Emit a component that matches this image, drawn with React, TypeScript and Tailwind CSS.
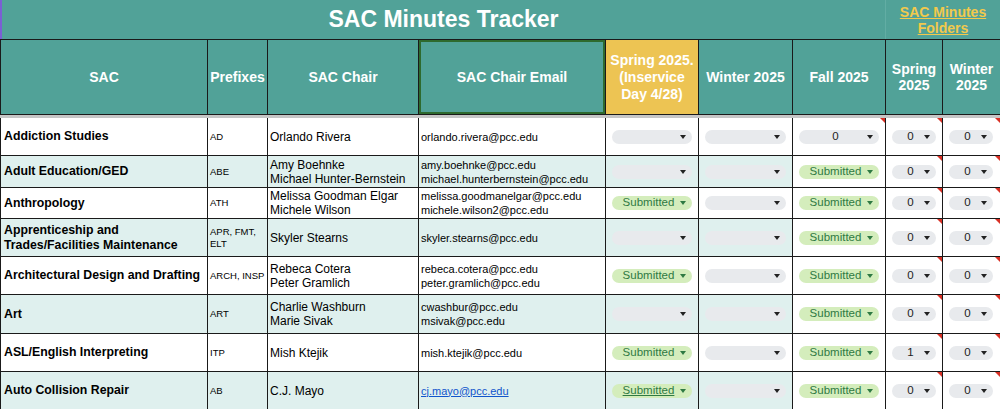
const cols = "grid grid-cols-[206px_59px_150px_186px_92px_93px_92px_56px_57px] gap-x-px pl-px";

type Chip = "" | "0" | "1" | "Submitted";

type Row = {
  sac: string[];
  prefix: string[];
  chair: string[];
  email: string[];
  link?: boolean;
  spring: Chip;
  winter: Chip;
  fall: Chip;
  spring25: Chip;
  winter25: Chip;
  fallNote?: boolean;
  h: string;
};

const rows: Row[] = [
  { sac: ["Addiction Studies"], prefix: ["AD"], chair: ["Orlando Rivera"], email: ["orlando.rivera@pcc.edu"], spring: "", winter: "", fall: "0", spring25: "0", winter25: "0", fallNote: true, h: "h-[37px]" },
  { sac: ["Adult Education/GED"], prefix: ["ABE"], chair: ["Amy Boehnke", "Michael Hunter-Bernstein"], email: ["amy.boehnke@pcc.edu", "michael.hunterbernstein@pcc.edu"], spring: "", winter: "", fall: "Submitted", spring25: "0", winter25: "0", h: "h-[31px]" },
  { sac: ["Anthropology"], prefix: ["ATH"], chair: ["Melissa Goodman Elgar", "Michele Wilson"], email: ["melissa.goodmanelgar@pcc.edu", "michele.wilson2@pcc.edu"], spring: "Submitted", winter: "", fall: "Submitted", spring25: "0", winter25: "0", h: "h-[30px]" },
  { sac: ["Apprenticeship and", "Trades/Facilities Maintenance"], prefix: ["APR, FMT,", "ELT"], chair: ["Skyler Stearns"], email: ["skyler.stearns@pcc.edu"], spring: "", winter: "", fall: "Submitted", spring25: "0", winter25: "0", h: "h-[37px]" },
  { sac: ["Architectural Design and Drafting"], prefix: ["ARCH, INSP"], chair: ["Rebeca Cotera", "Peter Gramlich"], email: ["rebeca.cotera@pcc.edu", "peter.gramlich@pcc.edu"], spring: "Submitted", winter: "", fall: "Submitted", spring25: "0", winter25: "0", h: "h-[37px]" },
  { sac: ["Art"], prefix: ["ART"], chair: ["Charlie Washburn", "Marie Sivak"], email: ["cwashbur@pcc.edu", "msivak@pcc.edu"], spring: "", winter: "", fall: "Submitted", spring25: "0", winter25: "0", h: "h-[38px]" },
  { sac: ["ASL/English Interpreting"], prefix: ["ITP"], chair: ["Mish Ktejik"], email: ["mish.ktejik@pcc.edu"], spring: "Submitted", winter: "", fall: "Submitted", spring25: "1", winter25: "0", h: "h-[37px]" },
  { sac: ["Auto Collision Repair"], prefix: ["AB"], chair: ["C.J. Mayo"], email: ["cj.mayo@pcc.edu"], link: true, spring: "Submitted", winter: "", fall: "Submitted", spring25: "0", winter25: "0", h: "h-[37px]" },
];

function Note() {
  return <span className="absolute top-0 right-0 w-0 h-0 border-l-[5px] border-l-transparent border-t-[5px] border-t-[#d93025]" />;
}

function Dropdown({ value, underline }: { value: Chip; underline?: boolean }) {
  const green = value === "Submitted";
  return (
    <div
      className={`mx-[6px] flex h-[14px] w-full items-center rounded-full pl-[7px] pr-[6px] ${
        green ? "bg-[#d4edbc] text-[#2f7a43]" : "bg-[#e8eaed] text-[#222]"
      }`}
    >
      <span className={`flex-1 text-center text-[11.5px] leading-none ${underline ? "underline" : ""}`}>{value}</span>
      <span className="ml-[2px] h-0 w-0 border-x-[3.5px] border-x-transparent border-t-[4px] border-t-current" />
    </div>
  );
}

function Lines({ items }: { items: string[] }) {
  return (
    <>
      {items.map((t) => (
        <div key={t}>{t}</div>
      ))}
    </>
  );
}

export default function App() {
  return (
    <div className="h-[409px] w-[1000px] overflow-hidden bg-white font-['Liberation_Sans',Arial,sans-serif] text-black">
      {/* Title band */}
      <div className="flex h-[39px] bg-[#51a298]">
        <div className="w-[2px] bg-[#7b5fd4]" />
        <div className="flex flex-1 items-center justify-center text-[23px] font-bold text-white">SAC Minutes Tracker</div>
        <div className="flex w-[115px] flex-col items-center justify-center border-l border-[#62ada4] text-[14px] font-bold leading-[16px] text-[#f2c94c] underline">
          <span>SAC Minutes</span>
          <span>Folders</span>
        </div>
      </div>

      {/* Header row */}
      <div className={`${cols} bg-[#1a1a1a] py-px text-[14px] font-bold leading-[17px] text-white`}>
        <div className="flex h-[74px] items-center justify-center bg-[#51a298]">SAC</div>
        <div className="flex items-center justify-center bg-[#51a298]">Prefixes</div>
        <div className="flex items-center justify-center bg-[#51a298]">SAC Chair</div>
        <div className="flex items-center justify-center border-2 border-[#2e6a2e] bg-[#51a298]">SAC Chair Email</div>
        <div className="flex flex-col items-center justify-center bg-[#edc453] text-center">
          <span>Spring 2025.</span>
          <span>(Inservice</span>
          <span>Day 4/28)</span>
        </div>
        <div className="flex items-center justify-center bg-[#51a298]">Winter 2025</div>
        <div className="flex items-center justify-center bg-[#51a298]">Fall 2025</div>
        <div className="flex flex-col items-center justify-center bg-[#51a298] leading-[16px]">
          <span>Spring</span>
          <span>2025</span>
        </div>
        <div className="flex flex-col items-center justify-center bg-[#51a298] leading-[16px]">
          <span>Winter</span>
          <span>2025</span>
        </div>
      </div>

      {/* Frozen divider */}
      <div className="h-[3px] bg-[#c6c6c6]" />

      {/* Body */}
      <div className="flex flex-col gap-y-px bg-[#1a1a1a]">
        {rows.map((r, i) => {
          const shade = i % 2 === 1 ? "bg-[#dff0ee]" : "bg-white";
          return (
            <div key={r.sac.join(" ")} className={`${cols} ${r.h}`}>
              <div className={`${shade} flex flex-col justify-center pl-[3px] text-[12.3px] font-bold leading-[15px]`}>
                <Lines items={r.sac} />
              </div>
              <div className={`${shade} flex flex-col justify-center whitespace-nowrap pl-[2px] text-[9.5px] leading-[12px]`}>
                <Lines items={r.prefix} />
              </div>
              <div className={`${shade} flex flex-col justify-center pl-[2px] text-[12px] leading-[14px]`}>
                <Lines items={r.chair} />
              </div>
              <div className={`${shade} flex flex-col justify-center pl-[2px] text-[11px] leading-[14px]`}>
                {r.link ? (
                  <span className="text-[#1155cc] underline">{r.email[0]}</span>
                ) : (
                  <Lines items={r.email} />
                )}
              </div>
              <div className={`${shade} flex items-center`}>
                <Dropdown value={r.spring} underline={r.link} />
              </div>
              <div className={`${shade} flex items-center`}>
                <Dropdown value={r.winter} />
              </div>
              <div className="relative flex items-center bg-white">
                <Dropdown value={r.fall} />
                {r.fallNote && <Note />}
              </div>
              <div className="relative flex items-center bg-white">
                <Dropdown value={r.spring25} />
                <Note />
              </div>
              <div className="relative flex items-center bg-white pr-px">
                <Dropdown value={r.winter25} />
                <Note />
              </div>
            </div>
          );
        })}
      </div>
    </div>
  );
}
